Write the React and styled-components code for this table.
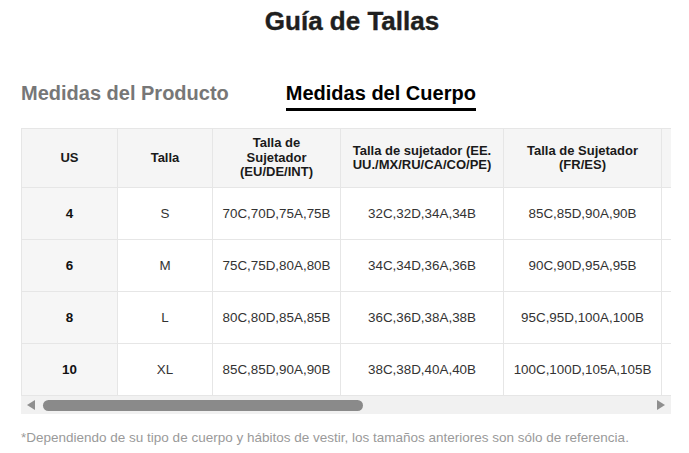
import React from "react";
import styled, { createGlobalStyle } from "styled-components";

const GlobalStyle = createGlobalStyle`
  html, body {
    margin: 0;
    padding: 0;
    background: #fff;
    font-family: "Liberation Sans", Arial, sans-serif;
  }
`;

const columns = [
  { title: "US", width: 96 },
  { title: "Talla", width: 95 },
  { title: "Talla de Sujetador (EU/DE/INT)", width: 128 },
  { title: "Talla de sujetador (EE. UU./MX/RU/CA/CO/PE)", width: 163 },
  { title: "Talla de Sujetador (FR/ES)", width: 158 },
  { title: "Talla de Sujetador (JP)", width: 128 },
  { title: "Talla de Sujetador (UK/AU)", width: 163 },
  { title: "Talla de Sujetador (IT)", width: 158 },
  { title: "Contorno Bajo Pecho (cm)", width: 165 },
];

const rows = [
  ["4", "S", "70C,70D,75A,75B", "32C,32D,34A,34B", "85C,85D,90A,90B", "70C,70D,75A,75B", "32C,32D,34A,34B", "1C,1D,2A,2B", "68-72"],
  ["6", "M", "75C,75D,80A,80B", "34C,34D,36A,36B", "90C,90D,95A,95B", "75C,75D,80A,80B", "34C,34D,36A,36B", "2C,2D,3A,3B", "73-77"],
  ["8", "L", "80C,80D,85A,85B", "36C,36D,38A,38B", "95C,95D,100A,100B", "80C,80D,85A,85B", "36C,36D,38A,38B", "3C,3D,4A,4B", "78-82"],
  ["10", "XL", "85C,85D,90A,90B", "38C,38D,40A,40B", "100C,100D,105A,105B", "85C,85D,90A,90B", "38C,38D,40A,40B", "4C,4D,5A,5B", "83-87"],
];

const VIEW = 650;
const TRACK = 618;

const Page = styled.div`
  width: ${VIEW}px;
  margin-left: 21px;
`;

const Title = styled.h1`
  margin: 0;
  padding: 6px 0 0 12px;
  height: 30px;
  text-align: center;
  font-size: 26px;
  line-height: 30px;
  font-weight: 700;
  color: #1f1f1f;
  -webkit-text-stroke: 0.4px #1f1f1f;
`;

const Tabs = styled.div`
  display: flex;
  gap: 57px;
  margin-top: 45px;
`;

const Tab = styled.div`
  font-size: 20px;
  line-height: 24px;
  font-weight: 700;
  color: ${(p) => (p.$active ? "#000" : "#777")};
  padding-bottom: 3px;
  border-bottom: 3px solid ${(p) => (p.$active ? "#000" : "transparent")};
`;

const Scroller = styled.div`
  margin-top: 17px;
  overflow: hidden;
  width: ${VIEW}px;
`;

const Table = styled.table`
  border-collapse: collapse;
  table-layout: fixed;
  width: ${(p) => p.$width}px;
`;

const HeadCell = styled.th`
  height: 58px;
  padding: 0 10px;
  border: 1px solid #e6e6e6;
  background: #f5f5f5;
  font-size: 13px;
  line-height: 14.5px;
  font-weight: 700;
  color: #1a1a1a;
  text-align: center;
  vertical-align: middle;
`;

const Cell = styled.td`
  height: 51px;
  padding: 0 6px;
  border: 1px solid #e6e6e6;
  background: ${(p) => (p.$first ? "#f6f6f6" : "#fff")};
  font-size: 13.4px;
  font-weight: ${(p) => (p.$first ? 700 : 400)};
  color: ${(p) => (p.$first ? "#111" : "#333")};
  text-align: center;
  vertical-align: middle;
  white-space: nowrap;
`;

const ScrollBar = styled.div`
  display: flex;
  align-items: center;
  height: 18px;
  background: #f1f1f1;
`;

const Arrow = styled.div`
  width: 0;
  height: 0;
  border-top: 5px solid transparent;
  border-bottom: 5px solid transparent;
  ${(p) =>
    p.$dir === "left"
      ? "border-right: 8px solid #8f8f8f; margin: 0 8px 0 6px;"
      : "border-left: 8px solid #8f8f8f; margin: 0 6px 0 8px;"}
`;

const Track = styled.div`
  flex: 1;
  height: 11px;
  display: flex;
  align-items: center;
`;

const Thumb = styled.div`
  height: 11px;
  border-radius: 6px;
  background: #8a8a8a;
`;

const Note = styled.p`
  margin: 16px 0 0;
  font-size: 13.5px;
  color: #9a9a9a;
  white-space: nowrap;
`;

export default function App() {
  const total = columns.reduce((s, c) => s + c.width, 0);
  const thumbWidth = Math.round((VIEW / total) * TRACK);

  return (
    <>
      <GlobalStyle />
      <Page>
        <Title>Guía de Tallas</Title>
        <Tabs>
          <Tab>Medidas del Producto</Tab>
          <Tab $active>Medidas del Cuerpo</Tab>
        </Tabs>
        <Scroller>
          <Table $width={total}>
            <colgroup>
              {columns.map((c) => (
                <col key={c.title} style={{ width: c.width }} />
              ))}
            </colgroup>
            <thead>
              <tr>
                {columns.map((c) => (
                  <HeadCell key={c.title}>{c.title}</HeadCell>
                ))}
              </tr>
            </thead>
            <tbody>
              {rows.map((r) => (
                <tr key={r[0]}>
                  {r.map((v, i) => (
                    <Cell key={i} $first={i === 0}>
                      {v}
                    </Cell>
                  ))}
                </tr>
              ))}
            </tbody>
          </Table>
        </Scroller>
        <ScrollBar>
          <Arrow $dir="left" />
          <Track>
            <Thumb style={{ width: thumbWidth }} />
          </Track>
          <Arrow $dir="right" />
        </ScrollBar>
        <Note>
          *Dependiendo de su tipo de cuerpo y hábitos de vestir, los tamaños
          anteriores son sólo de referencia.
        </Note>
      </Page>
    </>
  );
}
